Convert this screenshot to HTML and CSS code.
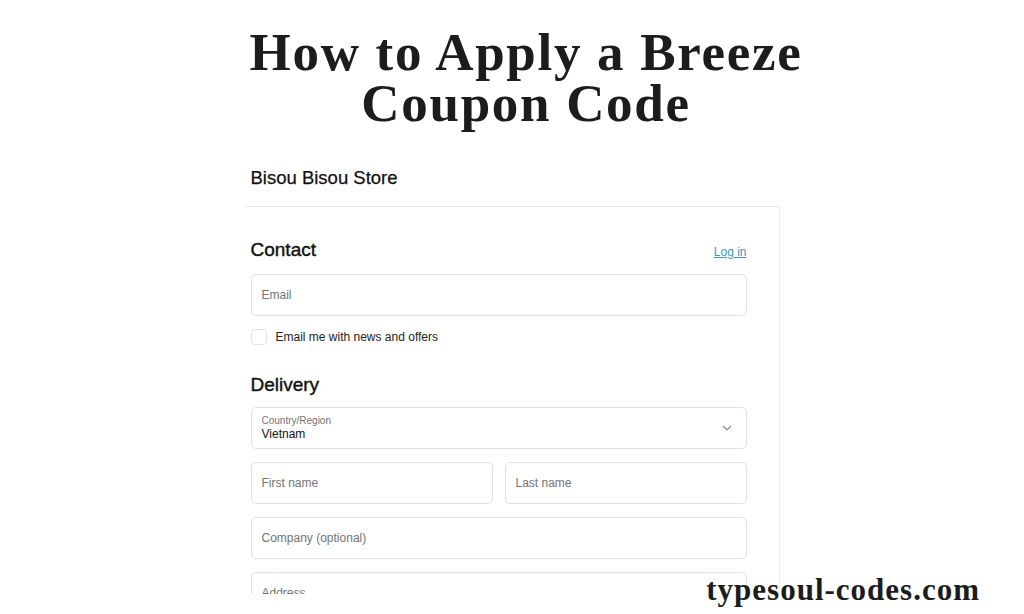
FILE: index.html
```html
<!DOCTYPE html>
<html lang="en">
<head>
<meta charset="utf-8">
<title>How to Apply a Breeze Coupon Code</title>
<link rel="stylesheet" href="styles.css">
</head>
<body>
<h1 class="title"><span class="tl">How to Apply a Breeze</span><span class="tl">Coupon Code</span></h1>
<div class="shot">
  <div class="store">Bisou Bisou Store</div>
  <div class="panel">
    <div class="section-head">
      <h2 class="heading">Contact</h2>
      <a class="login" href="#">Log in</a>
    </div>
    <div class="field"><span class="ph">Email</span></div>
    <label class="check"><span class="box"></span><span>Email me with news and offers</span></label>
    <h2 class="heading delivery">Delivery</h2>
    <div class="field select">
      <div class="sel-text">
        <span class="sel-label">Country/Region</span>
        <span class="sel-value">Vietnam</span>
      </div>
      <svg class="chev" width="10" height="6" viewBox="0 0 10 6"><path d="M1 1l4 4 4-4" fill="none" stroke="#888" stroke-width="1.2"/></svg>
    </div>
    <div class="row">
      <div class="field"><span class="ph">First name</span></div>
      <div class="field"><span class="ph">Last name</span></div>
    </div>
    <div class="field"><span class="ph">Company (optional)</span></div>
    <div class="field"><span class="ph">Address</span></div>
  </div>
</div>
<div class="watermark">typesoul-codes.com</div>
</body>
</html>
```

FILE: styles.css
```css
html, body {
  margin: 0;
  padding: 0;
  background: #fff;
}
body {
  width: 1024px;
  height: 614px;
  overflow: hidden;
  position: relative;
  font-family: "Liberation Sans", Arial, sans-serif;
  color: #1a1a1a;
}
.title {
  margin: 0;
  padding: 27px 0 0 28px;
  text-align: center;
  font-family: "Liberation Serif", "Times New Roman", serif;
  font-weight: 700;
  font-size: 53px;
  letter-spacing: 1.7px;
  color: #1c1c1c;
  height: 156px;
  box-sizing: border-box;
}
.tl {
  display: block;
  line-height: 51px;
  height: 51px;
}
.shot {
  width: 535px;
  margin: 0 auto;
  height: 438px;
  overflow: hidden;
}
.store {
  height: 51px;
  box-sizing: border-box;
  border-bottom: 1px solid #e8e8e8;
  padding: 11px 0 0 6px;
  font-size: 18.5px;
  line-height: 22px;
  color: #111;
  -webkit-text-stroke: 0.25px #111;
}
.panel {
  border-right: 1px solid #ececec;
  padding: 32px 32px 40px 6px;
  display: flex;
  flex-direction: column;
  gap: 13px;
}
.section-head {
  display: flex;
  justify-content: space-between;
  align-items: center;
}
.heading {
  margin: 0;
  font-size: 19px;
  line-height: 22px;
  font-weight: 400;
  color: #111;
  -webkit-text-stroke: 0.4px #111;
}
.delivery {
  margin-top: 16px;
  margin-bottom: -2px;
}
.login {
  font-size: 12px;
  color: #3f95c4;
  text-decoration: underline;
  margin-top: 4px;
}
.field {
  height: 42px;
  box-sizing: border-box;
  border: 1px solid #e1e1e1;
  border-radius: 5px;
  padding: 0 10px;
  display: flex;
  align-items: center;
  flex-shrink: 0;
}
.ph {
  font-size: 12px;
  color: #737373;
}
.check {
  display: flex;
  align-items: center;
  gap: 9px;
  font-size: 12px;
  color: #222;
  height: 16px;
}
.box {
  width: 16px;
  height: 16px;
  box-sizing: border-box;
  border: 1px solid #e1e1e1;
  border-radius: 4px;
}
.select {
  justify-content: space-between;
  padding-right: 14px;
}
.sel-text {
  display: flex;
  flex-direction: column;
}
.sel-label {
  font-size: 10px;
  line-height: 13px;
  color: #737373;
}
.sel-value {
  font-size: 12px;
  line-height: 15px;
  color: #111;
}
.row {
  display: flex;
  gap: 12px;
}
.row .field {
  flex: 1;
}
.watermark {
  position: absolute;
  right: 44px;
  bottom: 6px;
  font-family: "Liberation Serif", "Times New Roman", serif;
  font-weight: 700;
  font-size: 31px;
  letter-spacing: 1px;
  line-height: 36px;
  color: #1c1c1c;
}
```
